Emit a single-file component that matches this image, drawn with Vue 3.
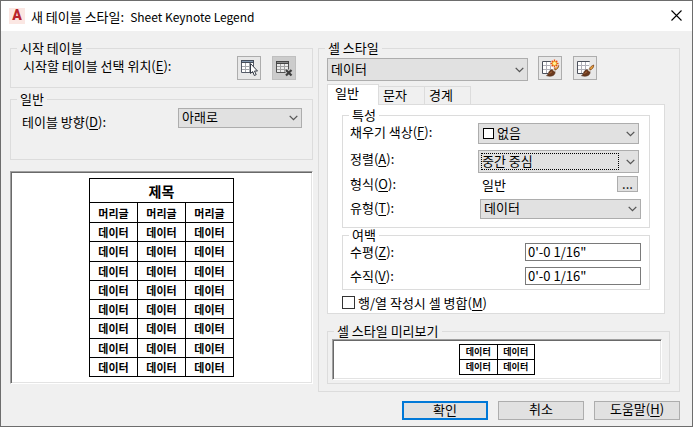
<script setup>
import { ref } from 'vue'

const direction = ref('아래로')
const cellStyle = ref('데이터')
const fill = ref('없음')
const align = ref('중간 중심')
const kind = ref('데이터')
const horizontal = ref('0\'-0 1/16"')
const vertical = ref('0\'-0 1/16"')
const merge = ref(false)
const activeTab = ref('일반')
const tabs = ['일반', '문자', '경계']
</script>

<template>
  <div class="dialog" role="dialog" aria-labelledby="dialog-title">
    <header class="titlebar">
      <span class="logo" aria-hidden="true">A</span>
      <h1 id="dialog-title"><span>새 테이블 스타일:</span> <span class="name">Sheet Keynote Legend</span></h1>
      <button class="close" type="button" aria-label="닫기">
        <svg width="11" height="11" viewBox="0 0 11 11"><path d="M.5.5l10 10M10.5.5l-10 10" stroke="#000" stroke-width="1.1" /></svg>
      </button>
    </header>

    <main class="content">
      <div class="left">
        <fieldset class="group start">
          <legend>시작 테이블</legend>
          <span class="text">시작할 테이블 선택 위치(<u>E</u>):</span>
          <div class="tools">
            <button class="tool" type="button" aria-label="테이블 선택">
              <svg width="22" height="22" viewBox="1 1 22 22">
                <path d="M4 5h13v12H4z" fill="#fff" />
                <path d="M8.500 7v9M12.500 7v9M5 10.500h11M5 13.500h11" stroke="#a3a6ab" />
                <path d="M4.500 4.500h12v12h-12z" fill="none" stroke="#555b67" />
                <path d="M4 4h13v3H4z" fill="#454c59" />
                <path d="M5 5h11v1H5z" fill="#8499b0" />
                <path d="M13.500 7.500v10l2.200-2 1.600 4 1.900-.8-1.700-3.700h3z" fill="#fff" stroke="#343a45" />
              </svg>
            </button>
            <button class="tool pressed" type="button" aria-label="테이블 제거">
              <svg width="22" height="22" viewBox="1 1 22 22">
                <path d="M4 5h13v12H4z" fill="#ececec" />
                <path d="M8.500 7v9M12.500 7v9M5 10.500h11M5 13.500h11" stroke="#a0a0a0" />
                <path d="M4.500 5.500h12v11h-12z" fill="none" stroke="#505050" />
                <path d="M4 5h13v3H4z" fill="#444" />
                <path d="M5 6h11v1H5z" fill="#888" />
                <path d="M14 14l5.500 5.500M19.500 14L14 19.500" stroke="#ccc" stroke-width="4" />
                <path d="M14 14l5.500 5.500M19.500 14L14 19.500" stroke="#3d3d3d" stroke-width="2.200" />
              </svg>
            </button>
          </div>
        </fieldset>

        <fieldset class="group general">
          <legend>일반</legend>
          <label class="text" for="direction">테이블 방향(<u>D</u>):</label>
          <span class="combo">
            <select id="direction" v-model="direction"><option>아래로</option><option>위로</option></select>
            <svg class="chevron" viewBox="0 0 9 6"><path d="M.7.9l3.800 3.800L8.300.9" /></svg>
          </span>
        </fieldset>

        <div class="sunken preview">
          <table class="sample large">
            <thead>
              <tr class="title"><th colspan="3">제목</th></tr>
              <tr class="head"><th v-for="c in 3" :key="c">머리글</th></tr>
            </thead>
            <tbody>
              <tr v-for="r in 8" :key="r"><td v-for="c in 3" :key="c">데이터</td></tr>
            </tbody>
          </table>
        </div>
      </div>

      <fieldset class="group cell">
        <legend><label for="cell-style">셀 스타일</label></legend>
        <div class="style-row">
          <span class="combo tall">
            <select id="cell-style" v-model="cellStyle"><option>데이터</option><option>머리글</option><option>제목</option></select>
            <svg class="chevron" viewBox="0 0 9 6"><path d="M.7.9l3.800 3.800L8.300.9" /></svg>
          </span>
          <button v-for="n in 2" :key="n" class="tool" type="button" :aria-label="n === 1 ? '새 셀 스타일' : '셀 스타일 관리'">
            <svg width="22" height="22" viewBox="1 1 22 22">
              <path d="M4.500 5.500h12v12h-12z" fill="#fff" stroke="#4c515c" />
              <path d="M8.500 6v11M12.500 6v11M5 9.500h11M5 13.500h11" stroke="#b0b0b8" />
              <path d="M17 6v12H10" fill="none" stroke="#e9e9e9" stroke-width="2" />
              <path d="M8.500 19.600c2.200-.8 1.600-3.400 3.500-5.100 1.700-1.400 3.700-.9 4.600.3 1 1.500.4 3.600-1.400 4.600-1.900 1.100-4.500 1-6.700.2z" fill="#6b3a1e" stroke="#4b2814" stroke-width=".6" />
              <path d="M11.500 17.500l2.500-1.800" stroke="#a8683c" />
              <path d="M15.400 14.800l2.200-2.400" stroke="#ddd6cc" stroke-width="2.800" />
              <path d="M17 14c2.200-.6 3.800-2.400 3.700-5-1.900.8-3.400 1.800-4 3.500z" fill="#e8a33c" stroke="#7c3f15" stroke-width=".8" />
              <template v-if="n === 1">
                <circle cx="16.500" cy="7.500" r="4.300" fill="#f5f0e6" />
                <path d="M16.500 3.500v8M12.500 7.500h8M13.700 4.700l5.600 5.600M19.300 4.700l-5.600 5.600" stroke="#e2481b" stroke-width="1.400" />
                <circle cx="16.500" cy="7.500" r="2.100" fill="#fff3a0" stroke="#f0a020" />
              </template>
            </svg>
          </button>
        </div>

        <div class="tabs" role="tablist">
          <button v-for="t in tabs" :key="t" type="button" role="tab" :aria-selected="t === activeTab" :class="['tab', { active: t === activeTab }]" @click="activeTab = t">{{ t }}</button>
        </div>
        <div class="panel" role="tabpanel">
          <fieldset class="group props">
            <legend>특성</legend>
            <div class="row fill">
              <label for="fill">채우기 색상(<u>F</u>):</label>
              <span class="combo swatched">
                <select id="fill" v-model="fill"><option>없음</option></select>
                <i class="swatch"></i>
                <svg class="chevron" viewBox="0 0 9 6"><path d="M.7.9l3.800 3.800L8.300.9" /></svg>
              </span>
            </div>
            <div class="row align">
              <label for="align">정렬(<u>A</u>):</label>
              <span class="combo tall">
                <select id="align" v-model="align"><option>중간 중심</option></select>
                <i class="focus"></i>
                <svg class="chevron" viewBox="0 0 9 6"><path d="M.7.9l3.800 3.800L8.300.9" /></svg>
              </span>
            </div>
            <div class="row format">
              <label for="format">형식(<u>O</u>):</label>
              <span class="value">일반</span>
              <button id="format" class="more" type="button">...</button>
            </div>
            <div class="row kind">
              <label for="kind">유형(<u>T</u>):</label>
              <span class="combo">
                <select id="kind" v-model="kind"><option>데이터</option><option>레이블</option></select>
                <svg class="chevron" viewBox="0 0 9 6"><path d="M.7.9l3.800 3.800L8.300.9" /></svg>
              </span>
            </div>
          </fieldset>

          <fieldset class="group margins">
            <legend>여백</legend>
            <div class="row"><label for="horizontal">수평(<u>Z</u>):</label><input id="horizontal" v-model="horizontal" type="text" /></div>
            <div class="row"><label for="vertical">수직(<u>V</u>):</label><input id="vertical" v-model="vertical" type="text" /></div>
          </fieldset>

          <div class="check"><input id="merge" v-model="merge" type="checkbox" /><label for="merge">행/열 작성시 셀 병합(<u>M</u>)</label></div>
        </div>

        <fieldset class="group cell-preview">
          <legend>셀 스타일 미리보기</legend>
          <div class="sunken">
            <table class="sample small">
              <tbody><tr v-for="r in 2" :key="r"><td v-for="c in 2" :key="c">데이터</td></tr></tbody>
            </table>
          </div>
        </fieldset>
      </fieldset>
    </main>

    <footer class="actions">
      <button class="action primary" type="button">확인</button>
      <button class="action" type="button">취소</button>
      <button class="action" type="button">도움말(<u>H</u>)</button>
    </footer>
  </div>
</template>

<style>
body { margin: 0; background: #f0f0f0; }
</style>

<style scoped>
.dialog {
  box-sizing: border-box;
  border: 1px solid #6d6d6d;
  background: #f0f0f0;
  color: #000;
  font: 13px/15px "Noto Sans CJK KR", sans-serif;
  white-space: nowrap;
}
.dialog *, .dialog *::before { box-sizing: border-box; }
button, select, input { margin: 0; font: inherit; color: inherit; border-radius: 0; }
u { text-underline-offset: 2px; text-decoration-thickness: 1px; }

.titlebar { display: flex; align-items: center; height: 30px; padding: 0 9px 0 8px; background: #fff; }
.logo { width: 16px; height: 16px; background: #fbe7e3; color: #b9252c; font: 900 14px/15px Roboto, sans-serif; text-align: center; }
h1 { display: flex; flex: 1; align-items: baseline; gap: 6px; margin: 0 0 0 6px; font-size: 13px; font-weight: 400; line-height: 17px; }
.name { font-size: 12px; }
.close { display: grid; place-items: center; width: 13px; height: 20px; padding: 0 0 2px; border: 0; background: none; }

.content { display: grid; grid-template-columns: minmax(0, 303fr) minmax(0, 362fr); gap: 5px; padding: 10px 12px 0 9px; }
.left { display: flex; flex-direction: column; }
.group { --inset: 7px; min-width: 0; margin: 0; padding: 0 0 0 var(--inset); border: 1px solid #dcdcdc; }
.group > legend { height: 15px; margin-left: calc(6px - var(--inset)); padding: 0 3px; line-height: 13px; }

.text { flex: 1; line-height: 20px; }
.start, .general { display: flex; align-items: flex-start; }
.start { --inset: 12px; padding-right: 16px; padding-bottom: 7px; }
.tools { display: flex; gap: 11px; }
.tool { display: block; width: 24px; height: 24px; padding: 0; border: 1px solid #adadad; background: #e8e8e8; }
.tool.pressed { border-color: #bfbfbf; background: #ccc; }
.tool svg { display: block; }
.general { --inset: 11px; margin-top: 4px; padding-top: 1px; padding-right: 10px; padding-bottom: 31px; }
.general .text { margin-top: 4px; margin-bottom: -4px; }
.general .combo { width: 124px; }

.combo { display: grid; height: 20px; }
.combo > * { grid-area: 1 / 1; }
.combo.tall { height: 23px; }
.combo select { width: 100%; height: 100%; min-width: 0; padding: 0 20px 3px 3px; appearance: none; border: 1px solid #adadad; background: #e1e1e1; outline: none; }
.chevron { width: 9px; height: 6px; margin-right: 4px; place-self: center end; pointer-events: none; }
.chevron path { fill: none; stroke: #555; stroke-width: 1.3; }
.swatched { height: 21px; }
.swatched select { padding-left: 18px; }
.swatch { width: 11px; height: 11px; margin-left: 5px; align-self: center; border: 1px solid #000; background: #fff; pointer-events: none; }
.focus { margin: 3px 20px 3px 3px; border: 1px dotted #000; pointer-events: none; }

.sunken { display: flex; justify-content: center; align-items: center; border: 1px solid; border-color: #a0a0a0 #fff #fff #a0a0a0; background: #fff; box-shadow: inset 1px 1px #696969, inset -1px -1px #e3e3e3; }
.preview { margin-top: 11px; height: 213px; }
.sample { border-collapse: collapse; table-layout: fixed; font-weight: 700; text-align: center; }
.sample th, .sample td { padding: 0; border: 1px solid #000; }
.large { width: 145px; height: 199px; font-size: 11px; line-height: 16px; }
.large .title { height: 24px; font-size: 14px; }
.large .head { height: 20px; }
.small { width: 76px; height: 31px; font-size: 9px; line-height: 12px; }

.cell { --inset: 8px; padding-right: 9px; padding-bottom: 7px; }
.style-row { display: flex; align-items: flex-start; }
.style-row .combo { width: 201px; margin: 2px 10px 0 0; }
.style-row .tool + .tool { margin-left: 11px; }

.tabs { display: flex; align-items: flex-end; margin-top: 3px; }
.tab { width: 46px; height: 18px; padding: 0 0 1px 4px; border: 1px solid #dcdcdc; border-width: 1px 1px 0 0; background: #f0f0f0; line-height: 14px; text-align: left; }
.tab.active { position: relative; width: 52px; height: 21px; margin-bottom: -1px; padding: 0 0 5px 7px; border-left-width: 1px; background: #fff; }
.panel { margin-right: 5px; padding: 3px 14px; border: 1px solid #dcdcdc; background: #fff; }
.props { display: flex; flex-direction: column; padding-right: 8px; padding-bottom: 8px; }
.row { display: flex; align-items: flex-start; }
.row > label { flex: 1; line-height: 18px; }
.props .combo { width: 161px; }
.fill, .align { margin-right: 2px; }
.align { margin-top: 6px; }
.format { align-items: center; margin: 2px 3px 0 0; }
.format .value { width: 135px; }
.more { width: 21px; height: 16px; padding: 0; border: 1px solid #adadad; background: #e1e1e1; line-height: 12px; }
.kind { margin-top: 6px; }
.margins { display: flex; flex-direction: column; gap: 6px; padding-right: 8px; padding-bottom: 4px; }
.margins input { width: 116px; height: 18px; padding: 0 2px 2px; border: 1px solid #7a7a7a; background: #fff; outline: none; }
.check { display: flex; align-items: center; gap: 3px; margin-top: 5px; height: 15px; }
.check input { width: 13px; height: 13px; appearance: none; border: 1px solid #333; background: #fff; }
.check label { line-height: 13px; }

.cell-preview { --inset: 4px; margin-top: 10px; padding-right: 7px; padding-bottom: 3px; }
.cell-preview .sunken { height: 41px; }

.actions { display: flex; justify-content: flex-end; gap: 10px; padding: 9px 12px 6px; }
.action { width: 86px; height: 19px; padding: 0 0 3px; border: 1px solid #adadad; background: #e1e1e1; line-height: 14px; }
.action.primary { padding-bottom: 2px; border: 2px solid #0078d7; line-height: 13px; }
</style>
